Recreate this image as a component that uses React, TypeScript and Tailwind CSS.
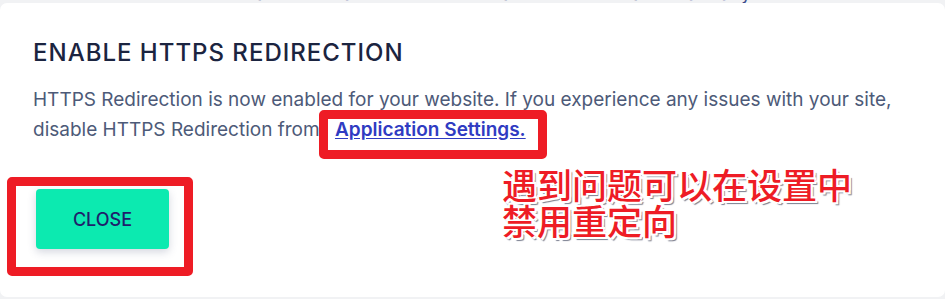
import React from "react";

export default function App() {
  return (
    <div className="relative w-[945px] h-[299px] overflow-hidden bg-[#f1f2f4]" style={{ fontFamily: 'Inter, "Liberation Sans", Arial, sans-serif' }}>
      {/* page text peeking above the dialog */}
      <div className="h-[3px] overflow-hidden px-[30px]">
        <p className="-mt-[14px] text-[17px] leading-[17px] text-[#3c4a8c] whitespace-nowrap tracking-[1px]">
          Your website SSL certificate is installed. The certificate will renew automatically on schedule.
        </p>
      </div>

      {/* dialog */}
      <div className="h-[294px] rounded-[7px] bg-white pl-[33px] pr-[10px] pt-[36px]">
        <h2 className="text-[24px] leading-[28px] font-medium tracking-[1px] text-[#1b2440]">
          ENABLE HTTPS REDIRECTION
        </h2>
        <p className="mt-[18px] text-[19px] leading-[30px] text-[#4d5a78] whitespace-nowrap">
          HTTPS Redirection is now enabled for your website. If you experience any issues with your site,
          <br />
          disable HTTPS Redirection from{" "}
          <a href="#" className="ml-[10px] font-semibold text-[#2f3bc2] underline underline-offset-2">
            Application Settings.
          </a>
        </p>
        <div className="mt-[44px] pl-[3px]">
          <button className="w-[133px] h-[60px] rounded-[4px] bg-[#0ceab0] text-[18px] font-medium text-[#1f1f6b] shadow-[0_3px_8px_rgba(60,70,110,0.22)]">
            CLOSE
          </button>
        </div>
      </div>

      {/* annotations */}
      <div className="absolute left-[319px] top-[110px] w-[228px] h-[49px] rounded-[5px] border-[9px] border-[#ee1c25]" />
      <div className="absolute left-[7px] top-[177px] w-[186px] h-[99px] rounded-[5px] border-[9px] border-[#ee1c25]" />
      <div
        className="absolute left-[502px] top-[166px] text-[35px] leading-[36px] font-medium text-[#ee1c25]"
        style={{
          fontFamily: '"Noto Sans CJK SC", sans-serif',
          textShadow:
            "1px 0 0 #fff, -1px 0 0 #fff, 0 1px 0 #fff, 0 -1px 0 #fff, 2px 2px 0 #fff, -2px 2px 0 #fff, 2px -2px 0 #fff, -2px -2px 0 #fff, 3px 3px 1px #7a7f90",
        }}
      >
        遇到问题可以在设置中
        <br />
        禁用重定向
      </div>
    </div>
  );
}
